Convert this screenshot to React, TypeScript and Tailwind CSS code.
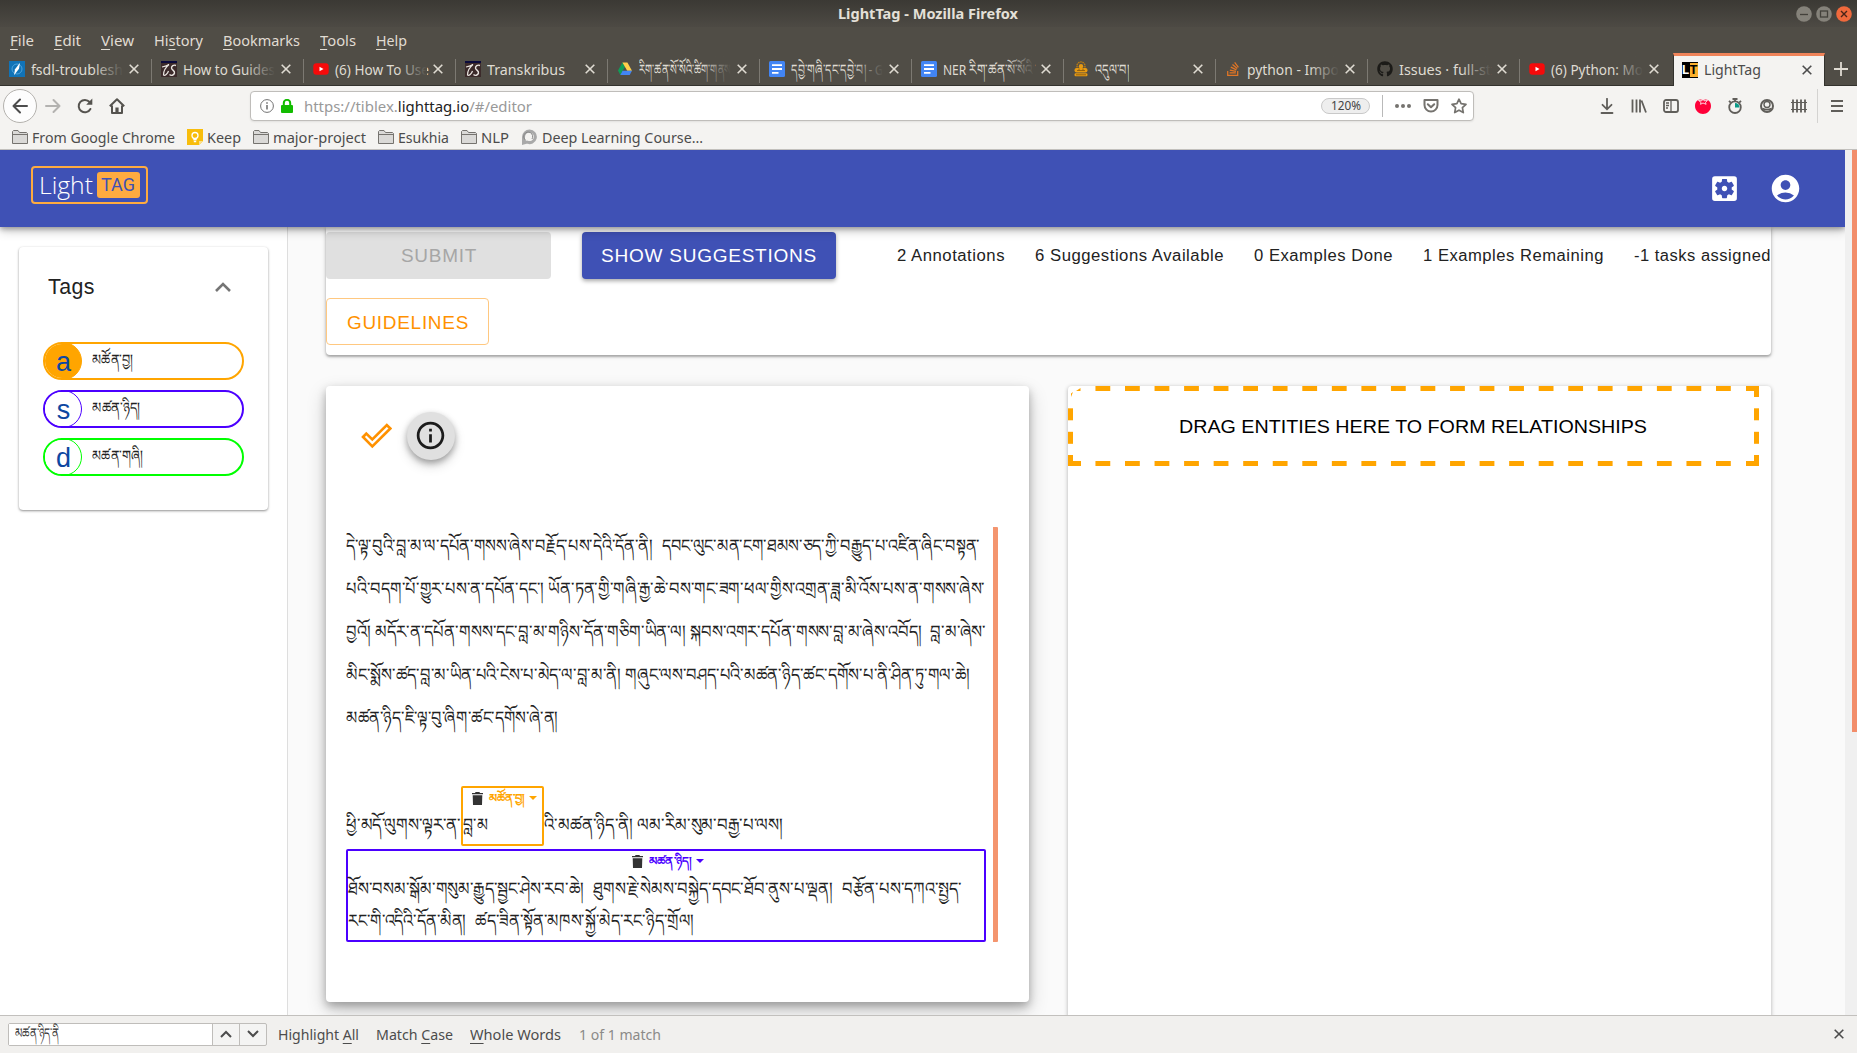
import React, { useLayoutEffect, useRef, useState } from 'react';
import { FaGithub, FaStackOverflow } from 'react-icons/fa';
import { MdAccountCircle, MdSettingsApplications, MdInfoOutline } from 'react-icons/md';

/** A single line of text, condensed or widened to occupy exactly `w` pixels. */
function Fit({ w, className = '', children }: { w: number; className?: string; children: React.ReactNode }) {
  const ref = useRef<HTMLSpanElement>(null);
  const [scale, setScale] = useState(1);
  useLayoutEffect(() => {
    if (ref.current && ref.current.offsetWidth > 0) {
      const natural = parseFloat(getComputedStyle(ref.current).width);
      setScale(w / natural);
    }
  }, [w]);
  return (
    <span className={`block shrink-0 whitespace-nowrap ${className}`} style={{ width: w }}>
      <span ref={ref} className="inline-block origin-left" style={{ transform: `scaleX(${scale})` }}>
        {children}
      </span>
    </span>
  );
}

const U = ({ children }: { children: string }) => (
  <span className="underline decoration-1 underline-offset-[3px]">{children}</span>
);

function Cross({ className = '' }: { className?: string }) {
  return (
    <svg viewBox="0 0 10 10" className={`h-[10px] w-[10px] shrink-0 ${className}`} stroke="currentColor" strokeWidth="1.6" fill="none">
      <path d="M.7.7l8.6 8.6M9.3.7L.7 9.3" />
    </svg>
  );
}

const fsdl = (
  <svg viewBox="0 0 16 16" className="h-4 w-4">
    <rect width="16" height="16" fill="#1173b7" />
    <circle cx="8" cy="8" r="5" fill="none" stroke="#4da3dc" />
    <path d="M11 1.800 6 8.200 5 14.200l5-6.400z" fill="#fff" />
  </svg>
);
const transkribus = (
  <svg viewBox="0 0 16 16" className="h-4 w-4">
    <rect width="16" height="16" fill="#3b2a2a" />
    <rect width="16" height="2" fill="#0b0b3c" />
    <path d="M1 6c2.500-.5 5-1 7-2.500C5 6 2.500 10 2.500 14c1.500 1 4-1 5-4" fill="none" stroke="#e8e4e0" strokeWidth="1.200" />
    <path d="M15 4.500c-2.500-1-4.500.5-4.500 2.500s3.500 2.500 3 5c-.5 2.500-3.500 3-5 1.500" fill="none" stroke="#e8e4e0" strokeWidth="1.400" />
  </svg>
);
const youtube = (
  <svg viewBox="0 0 16 16" className="h-4 w-4">
    <rect x="0.3" y="2.2" width="15.4" height="11.6" rx="3" fill="#f60a0a" />
    <path d="M6.5 5.7v4.6l4-2.3z" fill="#fff" />
  </svg>
);
const drive = (
  <svg viewBox="0 0 16 16" className="h-4 w-4">
    <path d="M5.4 1.5 1 9.6 3.3 14 8 5.8z" fill="#0f9d58" />
    <path d="M5.4 1.5h5L15 9.7h-4.8z" fill="#ffd04b" />
    <path d="M5.6 9.7H15L12.7 14H3.3z" fill="#4285f4" />
  </svg>
);
const docs = (
  <svg viewBox="0 0 16 16" className="h-4 w-4">
    <rect width="16" height="16" rx="1.5" fill="#4285f4" />
    <path d="M3 4.2h10M3 8h10M3 11.8h6.5" stroke="#fff" strokeWidth="1.8" />
  </svg>
);
const buddha = (
  <svg viewBox="0 0 16 16" className="h-4 w-4">
    <circle cx="8" cy="5" r="4" fill="none" stroke="#b87a14" strokeWidth="1.500" strokeDasharray="1.500 .7" />
    <circle cx="8" cy="5.200" r="2.200" fill="#e79a12" />
    <rect x="1.500" y="7" width="13" height="4.500" rx="2" fill="#e79a12" />
    <rect x="1.500" y="12.200" width="13" height="3" rx="1.200" fill="#e79a12" />
    <path d="M4 9.500h8M3 13.800h10M6 7.500v2M10 7.500v2" stroke="#85560c" strokeWidth=".8" />
  </svg>
);
const stack = <FaStackOverflow className="h-4 w-4 text-[#e27625]" />;
const github = <FaGithub className="h-4 w-4 text-[#1c1b18]" />;
const lt = (
  <span className="flex h-4 w-4 items-center justify-center bg-black font-['Roboto'] text-[13px] leading-4 font-bold">
    <span className="w-2 text-center text-white">L</span>
    <span className="h-[14px] w-2 bg-[#fbb02d] text-center leading-[14px] text-black">T</span>
  </span>
);

const tabs: { icon: React.ReactNode; label: string; w: number; fade?: boolean }[] = [
  { icon: fsdl, label: 'fsdl-troublesh', w: 92, fade: true },
  { icon: transkribus, label: 'How to Guides', w: 92, fade: true },
  { icon: youtube, label: '(6) How To Use', w: 94, fade: true },
  { icon: transkribus, label: 'Transkribus', w: 78 },
  { icon: drive, label: 'རིག་ཚན་སོ་སོའི་ཚིག་གནས', w: 92, fade: true },
  { icon: docs, label: 'དབྱེ་གཞི་དང་དབྱེ་བ། - G', w: 92, fade: true },
  { icon: docs, label: 'NER རིག་ཚན་སོ་སོའི་', w: 92, fade: true },
  { icon: buddha, label: 'འདུལ་བ།', w: 34 },
  { icon: stack, label: 'python - Impo', w: 92, fade: true },
  { icon: github, label: 'Issues · full-st', w: 92, fade: true },
  { icon: youtube, label: '(6) Python: Mo', w: 92, fade: true },
];

function TabBar() {
  return (
    <div className="flex h-[33px] border-b border-[#33322d]">
      {tabs.map((t, i) => (
        <div key={i} className="flex w-[152.05px] shrink-0 items-center">
          <div className="flex h-full flex-1 items-center pl-[9px]">
            <span className="shrink-0">{t.icon}</span>
            <div className="relative ml-[6px] w-[92px]">
              <Fit w={t.w} className="text-[15px] leading-[30px] text-[#dfdbd2]">{t.label}</Fit>
              {t.fade && <div className="absolute inset-y-0 right-0 w-[30px] bg-linear-to-r from-transparent to-[#504d46]" />}
            </div>
            <Cross className="ml-[6px] text-[#dfdbd2]" />
          </div>
          {i < tabs.length - 1 && <div className="mt-[3px] h-6 w-px bg-[#7c7972]" />}
        </div>
      ))}
      <div className="-mb-px flex w-[152px] shrink-0 items-center border-x border-t-[3px] border-x-[#33322d] border-t-[#f0845a] bg-[#f4f3f1] pb-[3px] pl-2 text-[#4c4c4c]">
        {lt}
        <Fit w={57} className="ml-[6px] text-[15px] leading-[27px]">LightTag</Fit>
        <Cross className="ml-[41px]" />
      </div>
      <div className="flex flex-1 items-center justify-center text-[#dfdbd2]">
        <svg viewBox="0 0 14 14" className="h-[14px] w-[14px]" stroke="currentColor" strokeWidth="1.8">
          <path d="M7 0v14M0 7h14" />
        </svg>
      </div>
    </div>
  );
}

function TitleBar() {
  return (
    <div className="flex h-[27px] items-center bg-linear-to-b from-[#3b3934] to-[#4d4a44] pr-[5px]">
      <div className="flex flex-1 justify-center pl-[59px]">
        <Fit w={180} className="text-[14.5px] leading-[27px] font-bold text-[#e4e0d8]">LightTag - Mozilla Firefox</Fit>
      </div>
      <svg viewBox="0 0 56 18" className="h-[18px] w-[56px]">
        <circle cx="8" cy="9" r="7.8" fill="#85827a" />
        <path d="M4 9.5h8" stroke="#43413b" strokeWidth="1.3" />
        <circle cx="28" cy="9" r="7.8" fill="#85827a" />
        <rect x="24.5" y="6" width="7" height="6" fill="none" stroke="#43413b" strokeWidth="1.3" />
        <circle cx="48" cy="9" r="7.8" fill="#f0693c" />
        <path d="M45 6l6 6M51 6l-6 6" stroke="#4a2418" strokeWidth="1.4" />
      </svg>
    </div>
  );
}

function MenuBar() {
  return (
    <div className="flex h-[26px] items-center pl-[10px] text-[15px] leading-[26px] text-[#e0dcd3]">
      <Fit w={24}><U>F</U>ile</Fit>
      <Fit w={27} className="ml-5"><U>E</U>dit</Fit>
      <Fit w={33} className="ml-5"><U>V</U>iew</Fit>
      <Fit w={49} className="ml-5">Hi<U>s</U>tory</Fit>
      <Fit w={77} className="ml-5"><U>B</U>ookmarks</Fit>
      <Fit w={36} className="ml-5"><U>T</U>ools</Fit>
      <Fit w={31} className="ml-5"><U>H</U>elp</Fit>
    </div>
  );
}

function NavBar() {
  return (
    <div className="flex h-[40px] items-center">
      <div className="ml-[3px] flex h-[34px] w-[34px] items-center justify-center rounded-full border border-[#b4b2ae] bg-[#fdfdfd]">
        <svg viewBox="0 0 16 16" className="h-4 w-4" fill="none" stroke="#4c4c4c" strokeWidth="2" strokeLinecap="round" strokeLinejoin="round">
          <path d="M15 8H1.5M8 1.5 1.5 8 8 14.5" />
        </svg>
      </div>
      <svg viewBox="0 0 16 16" className="ml-2 h-4 w-4" fill="none" stroke="#b3b2b0" strokeWidth="2" strokeLinecap="round" strokeLinejoin="round">
        <path d="M1 8h13.5M8.5 2l6 6-6 6" />
      </svg>
      <svg viewBox="0 0 16 16" className="ml-4 h-4 w-4" fill="none" stroke="#55534f" strokeWidth="2" strokeLinecap="round">
        <path d="M13.4 11A6.2 6.2 0 1 1 12.6 4" />
        <path d="M15.3.6v6.2H9.2z" fill="#55534f" stroke="none" />
      </svg>
      <svg viewBox="0 0 16 16" className="ml-4 h-4 w-4" fill="none" stroke="#55534f" strokeWidth="2" strokeLinejoin="round">
        <path d="M.8 8.3 8 1.2l7.2 7.1M3 7.5V15h10V7.5" />
        <path d="M6.4 15V9.5h3.2V15z" fill="#55534f" stroke="none" />
      </svg>
      <div className="ml-[125px] flex h-[30px] w-[1224px] items-center rounded-[4px] border border-[#bfbdba] bg-white shadow-[0_1px_2px_rgba(0,0,0,0.08)]">
        <svg viewBox="0 0 14 14" className="ml-[9px] h-[14px] w-[14px]" fill="none" stroke="#737373">
          <circle cx="7" cy="7" r="6.4" />
          <path d="M7 6v4.5M7 3.2v1.6" strokeWidth="1.6" />
        </svg>
        <svg viewBox="0 0 12 14" className="ml-[7px] h-[14px] w-3">
          <path d="M2.8 7V4a3.2 3.2 0 0 1 6.4 0v3" fill="none" stroke="#12bc00" strokeWidth="2" />
          <rect y="6" width="12" height="8" rx="1" fill="#12bc00" />
        </svg>
        <Fit w={228} className="ml-[11px] text-[15px] leading-[28px] text-[#999]">
          https://tiblex.<span className="text-[#222]">lighttag.io</span>/#/editor
        </Fit>
        <div className="ml-auto flex h-4 w-[49px] items-center justify-center rounded-full border border-[#c9c9c9] bg-[#eee]">
          <Fit w={30} className="text-[12px] leading-[14px] text-[#444]">120%</Fit>
        </div>
        <div className="ml-3 h-[22px] w-px bg-[#b9b9b9]" />
        <svg viewBox="0 0 16 16" className="ml-3 h-4 w-4" fill="#75736f">
          <circle cx="2" cy="8" r="2" /><circle cx="8" cy="8" r="2" /><circle cx="14" cy="8" r="2" />
        </svg>
        <svg viewBox="0 0 16 16" className="ml-3 h-4 w-4" fill="none" stroke="#75736f" strokeWidth="2" strokeLinejoin="round" strokeLinecap="round">
          <path d="M1.5 2h13v5a6.5 6.5 0 0 1-13 0zM4.8 6.2 8 9.3l3.2-3.1" />
        </svg>
        <svg viewBox="0 0 16 16" className="mr-[6px] ml-3 h-4 w-4" fill="none" stroke="#75736f" strokeWidth="1.7" strokeLinejoin="round">
          <path d="m8 1.2 2.1 4.5 4.9.6-3.6 3.4.9 4.9L8 12.2l-4.3 2.4.9-4.9L1 6.3l4.9-.6z" />
        </svg>
      </div>
      <svg viewBox="0 0 16 16" className="ml-[125px] h-4 w-4" fill="none" stroke="#605e5a" strokeWidth="1.8" strokeLinecap="round">
        <path d="M8 .8v10M3.5 6.8 8 11.3l4.5-4.5M2.5 15h11" />
      </svg>
      <svg viewBox="0 0 16 16" className="ml-4 h-4 w-4" fill="none" stroke="#605e5a" strokeWidth="1.800">
        <path d="M1.500 1.500v13M5.500 1.500v13M9 1.500v13M10.500 2.500l4.500 12" />
      </svg>
      <svg viewBox="0 0 16 16" className="ml-4 h-4 w-4" fill="none" stroke="#605e5a" strokeWidth="1.8">
        <rect x="1" y="2" width="14" height="12" rx="2" /><path d="M8 2v12M3 5h3M3 7.5h3M3 10h2" strokeWidth="1.3" />
      </svg>
      <svg viewBox="0 0 16 16" className="ml-4 h-4 w-4">
        <path d="M8 2c5-2 8 1.500 8 6S12 16 8 16 0 12.500 0 8 3 0 8 2z" fill="#ff0039" />
        <path d="M3.500 2.500 7 2.800 8 .5l1 2.300 3.500-.3-2 1.800.6 2L8 5 5.500 6.300l.5-2z" fill="#ff0039" stroke="#fff" strokeWidth=".8" />
      </svg>
      <svg viewBox="0 0 16 16" className="ml-4 h-4 w-4" fill="none" stroke="#605e5a" strokeWidth="1.8">
        <circle cx="8" cy="9.200" r="5.800" /><path d="M5.500 1h5M8 1v3M2 2.800l1.800 1.800M14 2.800l-1.800 1.800" />
        <path d="M8 5v4.500h4.500A4.500 4.500 0 0 0 8 5z" fill="#0a9a88" stroke="none" />
      </svg>
      <svg viewBox="0 0 16 16" className="ml-4 h-4 w-4" fill="none" stroke="#605e5a" strokeWidth="2">
        <circle cx="8" cy="8" r="6" /><circle cx="8" cy="6.500" r="3" strokeWidth="1.400" /><path d="M3.500 10.500c2.500 1.300 6.500 1.300 9 0" strokeWidth="1.600" />
      </svg>
      <svg viewBox="0 0 16 16" className="ml-4 h-4 w-4" fill="none" stroke="#605e5a" strokeWidth="1.800">
        <path d="M2 1.500v13M6 1.500v13M10 1.500v13M14 1.500v13" /><path d="M0 4.500h16M0 11.500h16" strokeWidth="1.200" />
      </svg>
      <div className="ml-[10px] h-[34px] w-px bg-[#d4d3d1]" />
      <svg viewBox="0 0 12 14" className="ml-[13px] h-[14px] w-3" stroke="#605e5a" strokeWidth="2">
        <path d="M0 2h12M0 7h12M0 12h12" />
      </svg>
    </div>
  );
}

function Folder({ className = '' }: { className?: string }) {
  return (
    <svg viewBox="0 0 16 14" className={`h-[14px] w-4 shrink-0 ${className}`} fill="#dad9d7" stroke="#75736f" strokeWidth="1">
      <path d="M.5 13V1.500L1.500.5H6l1.500 2h7l1 1V13.500H.5z" />
      <path d="M.5 4.500h15" />
    </svg>
  );
}

function Bookmarks() {
  return (
    <div className="flex h-[24px] items-center border-b border-[#c2c0bd] pb-[2px] pl-3 text-[15px] leading-[22px] text-[#4c4c4c]">
      <Folder />
      <Fit w={143} className="ml-1">From Google Chrome</Fit>
      <svg viewBox="0 0 16 16" className="ml-3 h-4 w-4">
        <path d="M0 0h16v12l-4 4H0z" fill="#f8bd0c" /><path d="M12 16v-4h4z" fill="#fbe08a" />
        <circle cx="8" cy="6.500" r="3" fill="none" stroke="#fff" strokeWidth="1.300" /><path d="M6.300 10.500h3.400M6.800 12.500h2.400" stroke="#fff" strokeWidth="1.300" />
      </svg>
      <Fit w={34} className="ml-1">Keep</Fit>
      <Folder className="ml-3" />
      <Fit w={93} className="ml-1">major-project</Fit>
      <Folder className="ml-3" />
      <Fit w={51} className="ml-1">Esukhia</Fit>
      <Folder className="ml-3" />
      <Fit w={28} className="ml-1">NLP</Fit>
      <svg viewBox="0 0 16 16" className="ml-3 h-4 w-4" fill="none">
        <path d="M8.500 2a5.800 5.800 0 1 1-2.500 11L2.500 14V8a6 6 0 0 1 6-6z" stroke="#a9a9a9" strokeWidth="3" />
        <path d="M5 11.500A4.500 4.500 0 1 1 11 10" stroke="#868686" strokeWidth="1" />
      </svg>
      <Fit w={161} className="ml-[5px]">Deep Learning Course…</Fit>
    </div>
  );
}

function AppHeader() {
  return (
    <header className="relative z-20 flex h-[77px] shrink-0 items-center bg-[#3f51b5] pl-[30.500px] font-['Roboto','Noto_Sans',sans-serif] text-white shadow-[0_2px_5px_rgba(0,0,0,0.3),0_4px_10px_rgba(0,0,0,0.2)]">
      <div className="-mt-[8px] flex h-[38px] w-[117px] items-center rounded-[4px] border-2 border-[#ffab40] pl-[6px]">
        <Fit w={54} className="font-['Open_Sans'] text-[23px] leading-[34px] font-[350]">Light</Fit>
        <div className="ml-[4px] flex h-[26px] w-[43px] items-center justify-center rounded-[3px] bg-[#ffab40] text-[#3f51b5]">
          <Fit w={34} className="text-[18px] leading-[26px]">TAG</Fit>
        </div>
      </div>
      <MdSettingsApplications className="ml-auto h-[33px] w-[33px]" />
      <MdAccountCircle className="mr-[43px] ml-[28px] h-[33px] w-[33px]" />
    </header>
  );
}

function Pill({ k, label, w, border, fill, ring }: { k: string; label: string; w: number; border: string; fill: string; ring: string }) {
  return (
    <div className={`flex h-[38px] w-[201px] overflow-hidden rounded-full border-2 ${border}`}>
      <div className={`-mt-[2px] -ml-[2px] flex h-[38px] w-[39px] shrink-0 justify-center rounded-full border ${fill} ${ring} pl-[2px] text-[27px] leading-[38px] text-[#0d47a1]`}>{k}</div>
      <Fit w={w} className="ml-[10px] text-[15px] leading-[31px] text-[#222]">{label}</Fit>
    </div>
  );
}

function Sidebar() {
  return (
    <aside className="w-[288px] shrink-0 border-r border-[#dedede] bg-white pt-5 pl-[19px]">
      <div className="h-[263px] w-[249px] rounded-[4px] bg-white pt-[20px] pl-6 shadow-[0_1px_3px_rgba(0,0,0,0.25),0_1px_2px_rgba(0,0,0,0.22)]">
        <div className="flex h-10 items-center pl-[5px]">
          <Fit w={47} className="text-[21.600px] leading-[44px] tracking-[0.5px] text-[#222]">Tags</Fit>
          <svg viewBox="0 0 16 10" className="ml-[120px] h-[10px] w-4" fill="none" stroke="#757575" strokeWidth="2.600">
            <path d="M1 9l7-7 7 7" />
          </svg>
        </div>
        <div className="mt-[35px] flex flex-col gap-[10px]">
          <Pill k="a" label="མཚོན་བྱ།" w={41} border="border-[#ffa500]" fill="bg-[#ffa500]" ring="border-[#ffa500]" />
          <Pill k="s" label="མཚན་ཉིད།" w={48} border="border-[#4b00ff]" fill="bg-white" ring="border-[#4b00ff]" />
          <Pill k="d" label="མཚན་གཞི།" w={51} border="border-[#00ff00]" fill="bg-white" ring="border-[#00ff00]" />
        </div>
      </div>
    </aside>
  );
}

function Toolbar() {
  return (
    <div className="h-[128px] w-[1445px] rounded-b-[4px] bg-white pt-[5px] shadow-[0_1px_4px_rgba(0,0,0,0.25),0_2px_2px_rgba(0,0,0,0.2)]">
      <div className="flex h-[47px] items-center text-[16px] leading-[52px] tracking-[0.5px] text-[#222]">
        <div className="flex h-[47px] w-[225px] items-center justify-center rounded-[4px] bg-[#e0e0e0] text-[18px] leading-[50px] tracking-[0.7px] text-[#a6a6a6]">
          <Fit w={76}>SUBMIT</Fit>
        </div>
        <div className="ml-[31px] flex h-[47px] w-[254px] items-center justify-center rounded-[4px] bg-[#3f51b5] text-[18px] leading-[50px] tracking-[0.7px] text-white shadow-[0_2px_4px_rgba(0,0,0,0.35)]">
          <Fit w={216}>SHOW SUGGESTIONS</Fit>
        </div>
        <Fit w={108} className="ml-[61px]">2 Annotations</Fit>
        <Fit w={189} className="ml-[30px]">6 Suggestions Available</Fit>
        <Fit w={139} className="ml-[30px]">0 Examples Done</Fit>
        <Fit w={181} className="ml-[30px]">1 Examples Remaining</Fit>
        <Fit w={137} className="ml-[30px]">-1 tasks assigned</Fit>
      </div>
      <div className="mt-[19px] flex h-[47px] w-[163px] justify-center rounded-[4px] border border-[#ffc880] text-[18px] leading-[48px] tracking-[0.7px] text-[#ff9100]">
        <Fit w={122}>GUIDELINES</Fit>
      </div>
    </div>
  );
}

const paragraph: [string, number][] = [
  ['དེ་ལྟ་བུའི་བླ་མ་ལ་དཔོན་གསས་ཞེས་བརྗོད་པས་དེའི་དོན་ནི།\u00a0 དབང་ལུང་མན་ངག་ཐམས་ཅད་ཀྱི་བརྒྱུད་པ་འཛིན་ཞིང་བསྟན་', 634],
  ['པའི་བདག་པོ་གྱུར་པས་ན་དཔོན་དང་། ཡོན་ཏན་གྱི་གཞི་རྒྱ་ཆེ་བས་གང་ཟག་ཕལ་གྱིས་འགྲན་ཟླ་མི་འོས་པས་ན་གསས་ཞེས་', 639],
  ['བྱའོ། མདོར་ན་དཔོན་གསས་དང་བླ་མ་གཉིས་དོན་གཅིག་ཡིན་ལ། སྐབས་འགར་དཔོན་གསས་བླ་མ་ཞེས་འབོད།\u00a0 བླ་མ་ཞེས་', 640],
  ['མིང་སྨོས་ཚད་བླ་མ་ཡིན་པའི་ངེས་པ་མེད་ལ་བླ་མ་ནི། གཞུང་ལས་བཤད་པའི་མཚན་ཉིད་ཚང་དགོས་པ་ནི་ཤིན་ཏུ་གལ་ཆེ།', 624],
  ['མཚན་ཉིད་ཇི་ལྟ་བུ་ཞིག་ཚང་དགོས་ཞེ་ན།', 212],
];

function TagLabel({ label, w, color }: { label: string; w: number; color: string }) {
  return (
    <div className={`flex h-[20px] items-center justify-center pl-1 ${color}`}>
      <svg viewBox="0 0 11 13" className="h-[13px] w-[11px] shrink-0" fill="#333">
        <path d="M0 1h3l.6-1h3.800L8 1h3v1.300H0zM.7 3.300h9.600L10 13H1z" />
      </svg>
      <Fit w={w} className="ml-[6px] text-[11.500px] leading-[16px] font-bold">{label}</Fit>
      <svg viewBox="0 0 8 4" className="ml-1 h-1 w-2 shrink-0" fill="currentColor"><path d="M0 0h8L4 4z" /></svg>
    </div>
  );
}

function Document() {
  return (
    <div className="h-[616px] w-[703px] rounded-[4px] bg-white pt-[26px] pl-5 shadow-[0_4px_8px_rgba(0,0,0,0.26),0_8px_20px_rgba(0,0,0,0.2)]">
      <div className="flex h-12 items-center">
        <svg viewBox="0 0 32 28" className="ml-[14px] h-[28px] w-8" fill="none" stroke="#ff9100" strokeWidth="2.600">
          <path d="M3 15 6.300 11.500l6 6L26.800 3 30.300 6.500 12.300 24.500z" />
        </svg>
        <div className="-mt-px ml-[14.500px] flex h-12 w-12 items-center justify-center rounded-full bg-[#e0e0e0] text-[#1b1b1b] shadow-[0_3px_6px_rgba(0,0,0,0.3),0_6px_12px_rgba(0,0,0,0.15)]">
          <MdInfoOutline className="h-[33px] w-[33px]" />
        </div>
      </div>
      <div className="mt-[67px] h-[415px] w-[652px] rounded-[1px] border-r-[5px] border-[#f4956f] text-[18px] text-[#222]">
        {paragraph.map(([line, w], i) => (
          <Fit key={i} w={w} className="h-[43px] leading-[39px]">{line}</Fit>
        ))}
        <div className="mt-[44px] flex h-[60px]">
          <Fit w={115} className="mt-[18px] leading-[43px]">ཕྱི་མདོ་ལུགས་ལྟར་ན་</Fit>
          <div className="w-[83px] rounded-[2px] border-2 border-[#ffa500]">
            <TagLabel label="མཚོན་བྱ།" w={36} color="text-[#ffa500]" />
            <Fit w={25} className="-mt-[4px] leading-[43px]">བླ་མ</Fit>
          </div>
          <Fit w={239} className="mt-[18px] leading-[43px]">འི་མཚན་ཉིད་ནི། ལམ་རིམ་སུམ་བརྒྱ་པ་ལས།</Fit>
        </div>
        <div className="mt-[3px] h-[93px] w-[640px] rounded-[2px] border-2 border-[#4b00ff]">
          <TagLabel label="མཚན་ཉིད།" w={43} color="text-[#4b00ff]" />
          <Fit w={614} className="mt-[2px] h-8 leading-8">ཐོས་བསམ་སྒོམ་གསུམ་རྒྱུད་སྦྱང་ཤེས་རབ་ཆེ།&nbsp; ཐུགས་རྗེ་སེམས་བསྐྱེད་དབང་ཐོབ་ནུས་པ་ལྡན།&nbsp; བརྩོན་པས་དཀའ་སྤྱད་</Fit>
          <Fit w={346} className="h-8 leading-8">རང་གི་འདིའི་དོན་མིན།&nbsp; ཚད་ཟིན་སྟོན་མཁས་སྐྱོ་མེད་རང་ཉིད་གྲོལ།</Fit>
        </div>
      </div>
    </div>
  );
}

/** Long-dash outline of the relationship drop zone. */
function DashedOutline() {
  const xs = Array.from({ length: 22 }, (_, i) => 5.3 + 29.55 * (i + 1));
  const ys = [28.3, 51.8];
  return (
    <svg viewBox="0 0 691 80" className="absolute inset-0 h-[80px] w-[691px]" fill="#ffa500">
      {xs.map((x) => (
        <g key={x}>
          <rect x={x - 7.4} y="0" width="14.8" height="5" />
          <rect x={x - 7.4} y="75" width="14.8" height="5" />
        </g>
      ))}
      {ys.map((y) => (
        <g key={y}>
          <rect x="0" y={y - 6} width="5" height="12" />
          <rect x="686" y={y - 6} width="5" height="12" />
        </g>
      ))}
      <path d="M678 0h13v11h-5V5h-8zM691 80h-13v-5h8v-6h5zM0 80V69h5v6h8v5z" />
      <path d="M12.500 2v3H8zM3 11V7.500L5 6z" />
    </svg>
  );
}

function FindBar() {
  return (
    <div className="flex h-[38px] shrink-0 items-center border-t border-[#c2c0bd] bg-[#f1f0ee] pb-px pl-2 text-[15px] leading-[30px] text-[#4c4c4c]">
      <div className="flex h-[23px] w-[259px] rounded-[2px] border border-[#bfbdba] bg-[#f4f4f3]">
        <div className="flex-1 bg-white pl-[6px]">
          <Fit w={44} className="text-[14px] leading-[18px] text-[#333]">མཚན་ཉིད་ནི</Fit>
        </div>
        <div className="flex w-[27px] items-center justify-center border-l border-[#bfbdba]">
          <svg viewBox="0 0 12 8" className="h-2 w-3" fill="none" stroke="#4c4c4c" strokeWidth="2"><path d="M1 7l5-5 5 5" /></svg>
        </div>
        <div className="flex w-[27px] items-center justify-center border-l border-[#bfbdba]">
          <svg viewBox="0 0 12 8" className="h-2 w-3" fill="none" stroke="#4c4c4c" strokeWidth="2"><path d="M1 1l5 5 5-5" /></svg>
        </div>
      </div>
      <Fit w={81} className="ml-[11px]">Highlight <U>A</U>ll</Fit>
      <Fit w={77} className="ml-[17px]">Match <U>C</U>ase</Fit>
      <Fit w={91} className="ml-[17px]"><U>W</U>hole Words</Fit>
      <Fit w={82} className="ml-[18px] text-[#8b8a88]">1 of 1 match</Fit>
      <Cross className="mr-[13px] ml-auto" />
    </div>
  );
}

export default function App() {
  return (
    <div className="flex h-[1053px] w-[1857px] flex-col overflow-hidden bg-[#fafafa] font-['Noto_Sans',sans-serif]">
      <div className="shrink-0 bg-[#504d46]">
        <TitleBar />
        <MenuBar />
        <TabBar />
        <div className="bg-[#f4f3f1]">
          <NavBar />
          <Bookmarks />
        </div>
      </div>
      <div className="flex min-h-0 flex-1">
        <div className="flex w-[1845px] flex-col overflow-hidden font-['Liberation_Sans',sans-serif]">
          <AppHeader />
          <div className="flex min-h-0 flex-1">
            <Sidebar />
            <main className="flex-1 pl-[38px]">
              <Toolbar />
              <div className="mt-[31px] flex gap-[39px]">
                <Document />
                <div className="h-[640px] w-[703px] rounded-t-[4px] bg-white shadow-[0_1px_4px_rgba(0,0,0,0.3)]">
                  <div className="relative flex h-[80px] w-[691px] justify-center pt-[5px] pr-[2px]">
                    <DashedOutline />
                    <Fit w={468} className="text-[18px] leading-[72px] text-black">DRAG ENTITIES HERE TO FORM RELATIONSHIPS</Fit>
                  </div>
                </div>
              </div>
            </main>
          </div>
        </div>
        <div className="flex flex-1 justify-end bg-[#f0f0f0]">
          <div className="h-[582px] w-[5px] bg-[#f28d6a]" />
        </div>
      </div>
      <FindBar />
    </div>
  );
}
